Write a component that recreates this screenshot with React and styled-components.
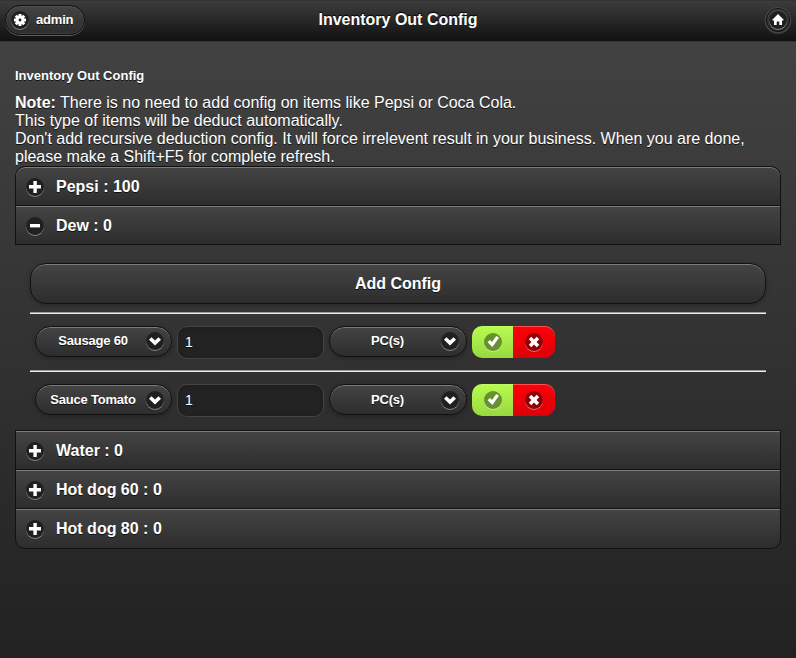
import React from "react";
import styled, { createGlobalStyle } from "styled-components";

const GlobalStyle = createGlobalStyle`
  * { box-sizing: border-box; }
  body {
    margin: 0;
    background: #222;
    font-family: "Liberation Sans", Arial, sans-serif;
    font-size: 16px;
    line-height: 18px;
    color: #fff;
    text-shadow: 0 1px 0 #111;
  }
  button, input { font: inherit; color: inherit; margin: 0; padding: 0; text-shadow: inherit; }
`;

const Page = styled.div`
  min-height: 658px;
  background: linear-gradient(#444, #222);
`;

const Header = styled.header`
  height: 42px;
  display: grid;
  grid-template-columns: 90px 1fr 90px;
  align-items: start;
  border: solid #333;
  border-width: 1px 0;
  background: linear-gradient(#3c3c3c, #111);
`;

const Title = styled.h1`
  margin: 9px 0 0;
  font-size: 16px;
  line-height: 20px;
  text-align: center;
  text-shadow: 0 -1px 1px #000;
`;

const HeaderButton = styled.button`
  display: flex;
  align-items: center;
  width: 80px;
  height: 30px;
  margin: 4px 0 0 5px;
  padding: 0 0 0 5px;
  gap: 7px;
  border: 1px solid #111;
  border-radius: 16px;
  background: linear-gradient(#444, #2d2d2d);
  box-shadow: inset 0 0 0 1px rgba(255, 255, 255, 0.08), 0 1px 0 rgba(255, 255, 255, 0.3);
  font-size: 13px;
  letter-spacing: -0.2px;
  font-weight: bold;
`;

const HomeButton = styled.button`
  display: flex;
  align-items: center;
  justify-content: center;
  justify-self: end;
  width: 24px;
  height: 24px;
  margin: 7px 6px 0 0;
  border: 1px solid #111;
  border-radius: 50%;
  background: linear-gradient(#444, #2d2d2d);
  box-shadow: 0 0 0 1px #484848, 0 1px 0 1px rgba(255, 255, 255, 0.15);
`;

const Content = styled.main`
  padding: 25px 15px 0;
`;

const Heading = styled.h4`
  margin: 0 0 9px;
  font-size: 13px;
  line-height: 18px;
`;

const Note = styled.p`
  margin: 0;
  height: 72px;
  white-space: nowrap;
`;

const Accordion = styled.section`
  display: flex;
  flex-direction: column;
`;

const AccordionHeader = styled.button`
  display: flex;
  align-items: center;
  gap: 12px;
  width: 100%;
  height: ${(p) => p.$height || 39}px;
  padding: ${(p) => (p.$height === 41 ? 1 : 2)}px 0 0 10px;
  border: solid #111;
  border-width: 1px 1px ${(p) => (p.$height ? 1 : 0)}px;
  border-radius: ${(p) => p.$radius || "0"};
  background: linear-gradient(#444, #2d2d2d);
  box-shadow: inset 0 1px 0 rgba(255, 255, 255, 0.3);
  font-weight: bold;
  text-align: left;
`;

const Panel = styled.div`
  height: 185px;
  padding: 18px 15px 0;
`;

const AddButton = styled.button`
  display: block;
  width: 100%;
  height: 41px;
  border: 1px solid #111;
  border-radius: 16px;
  background: linear-gradient(#444, #2d2d2d);
  box-shadow: inset 0 1px 0 rgba(255, 255, 255, 0.3), 0 1px 4px rgba(0, 0, 0, 0.3);
  font-weight: bold;
`;

const Rule = styled.hr`
  height: 2px;
  margin: ${(p) => p.$gap}px 0 12px;
  border: 0;
  border-top: 1px solid #9a9a9a;
  background: #eee;
`;

const ConfigRow = styled.div`
  display: flex;
  align-items: flex-start;
  height: 32px;
  padding-left: 5px;
`;

const Select = styled.button`
  display: flex;
  align-items: center;
  width: ${(p) => p.$width}px;
  height: 31px;
  padding: ${(p) => (p.$low ? "1px 7px 0 0" : "0 7px 1px 0")};
  border: 1px solid #111;
  border-radius: 16px;
  background: linear-gradient(#444, #2d2d2d);
  box-shadow: inset 0 1px 0 rgba(255, 255, 255, 0.3), 0 1px 4px rgba(0, 0, 0, 0.3);
  font-size: 13px;
  letter-spacing: -0.2px;
  font-weight: bold;
`;

const SelectLabel = styled.span`
  flex: 1;
  padding: 0 5px 1px 9px;
  text-align: center;
  white-space: nowrap;
`;

const Quantity = styled.input`
  width: 147px;
  height: 33px;
  margin: 0 5px;
  padding: 0 7px 2px;
  border: 1px solid #444;
  border-radius: 10px;
  background: #222;
  box-shadow: inset 0 1px 4px rgba(0, 0, 0, 0.2);
  font-size: 14px;
  outline: 0;
`;

const Actions = styled.div`
  display: flex;
  margin-left: 5px;
`;

const Action = styled.button`
  display: flex;
  align-items: center;
  justify-content: center;
  width: ${(p) => (p.$danger ? 42 : 41)}px;
  height: 32px;
  border: 0;
  border-radius: ${(p) => (p.$danger ? "0 10px 10px 0" : "10px 0 0 10px")};
  background: ${(p) =>
    p.$danger ? "linear-gradient(#ff0008, #dc0008)" : "linear-gradient(#b8fc50, #98d840)"};
  box-shadow: inset 0 1px 0 rgba(255, 255, 255, ${(p) => (p.$danger ? 0.3 : 0.1)});
`;

const Disc = styled.span`
  display: flex;
  flex: none;
  width: 18px;
  height: 18px;
  border-radius: 50%;
  background: ${(p) => p.$color || "#202020"};
  box-shadow: 0 1px 0 rgba(255, 255, 255, 0.4);
`;

const GEAR_TEETH = [0, 45, 90, 135];

const glyphs = {
  plus: <path d="M7.4 3h3.4v4H15v3.4h-4.2V15H7.4v-4.6H3V7h4.4z" />,
  minus: <path d="M4 7h10v3.4H4z" />,
  down: <path d="M3 7.8 5.5 5.3 9 8.6l3.5-3.3L15 7.8 9 13.6z" />,
  check: <path d="M3.6 9.3 6 6.9l2 2 4.3-5.9 2.7 1.8-6.6 9.2z" />,
  cross: <path d="m3.8 6.3 2.5-2.5L9 6.5l2.7-2.7 2.5 2.5L11.5 9l2.7 2.7-2.5 2.5L9 11.5l-2.7 2.7-2.5-2.5L6.5 9z" />,
  home: <path d="M9 3 14.5 8.4v1.1H13V14h-2.7v-3.5H7.7V14H5V9.5H3.5V8.4z" />,
  gear: (
    <>
      {GEAR_TEETH.map((angle) => (
        <rect key={angle} x="7.5" y="3" width="3" height="12" transform={`rotate(${angle} 9 9)`} />
      ))}
      <circle cx="9" cy="9" r="4.4" />
      <circle cx="9" cy="9" r="1.4" fill="#222" />
    </>
  ),
};

function Icon({ name, color }) {
  return (
    <Disc $color={color}>
      <svg width="18" height="18" viewBox="0 0 18 18" fill="#fff" aria-hidden="true">
        {glyphs[name]}
      </svg>
    </Disc>
  );
}

function Dropdown({ label, width, low }) {
  return (
    <Select $width={width} $low={low}>
      <SelectLabel>{label}</SelectLabel>
      <Icon name="down" />
    </Select>
  );
}

function ItemConfig({ item, low }) {
  return (
    <ConfigRow>
      <Dropdown label={item} width={137} low={low} />
      <Quantity defaultValue="1" />
      <Dropdown label="PC(s)" width={138} low={low} />
      <Actions>
        <Action aria-label="Save">
          <Icon name="check" color="#67902f" />
        </Action>
        <Action $danger aria-label="Delete">
          <Icon name="cross" color="#900006" />
        </Action>
      </Actions>
    </ConfigRow>
  );
}

export default function App() {
  return (
    <>
      <GlobalStyle />
      <Page>
        <Header>
          <HeaderButton>
            <Icon name="gear" />
            admin
          </HeaderButton>
          <Title>Inventory Out Config</Title>
          <HomeButton aria-label="Home">
            <Icon name="home" />
          </HomeButton>
        </Header>
        <Content>
          <Heading>Inventory Out Config</Heading>
          <Note>
            <b>Note:</b> There is no need to add config on items like Pepsi or Coca Cola.
            <br />
            This type of items will be deduct automatically.
            <br />
            Don't add recursive deduction config. It will force irrelevent result in your business. When you are done,
            <br />
            please make a Shift+F5 for complete refresh.
          </Note>
          <Accordion>
            <AccordionHeader $radius="10px 10px 0 0">
              <Icon name="plus" />
              Pepsi : 100
            </AccordionHeader>
            <AccordionHeader $height={40}>
              <Icon name="minus" />
              Dew : 0
            </AccordionHeader>
            <Panel>
              <AddButton>Add Config</AddButton>
              <Rule $gap={8} />
              <ItemConfig item="Sausage 60" />
              <Rule $gap={12} />
              <ItemConfig item="Sauce Tomato" low />
            </Panel>
            <AccordionHeader>
              <Icon name="plus" />
              Water : 0
            </AccordionHeader>
            <AccordionHeader>
              <Icon name="plus" />
              Hot dog 60 : 0
            </AccordionHeader>
            <AccordionHeader $height={41} $radius="0 0 10px 10px">
              <Icon name="plus" />
              Hot dog 80 : 0
            </AccordionHeader>
          </Accordion>
        </Content>
      </Page>
    </>
  );
}
